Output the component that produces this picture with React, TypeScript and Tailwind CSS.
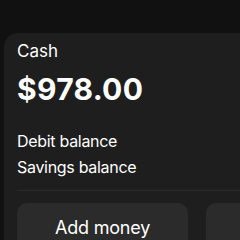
export default function App() {
  return (
    <div
      className="w-[240px] h-[240px] overflow-hidden bg-[#111111] pt-[33px] pl-[4px]"
      style={{ fontFamily: "Inter, 'Noto Sans', sans-serif" }}
    >
      <div className="w-[400px] rounded-tl-[14px] bg-[#1e1e1e] pl-[13px] pr-[13px] pt-[6px] pb-4">
        <div className="text-[17px] leading-[24px] text-white">Cash</div>
        <div className="mt-[8px] text-[30px] leading-[36px] font-bold tracking-[0.3px] text-white">$978.00</div>
        <div className="mt-[21px] text-[16px] leading-[26px] tracking-[-0.3px] text-white">Debit balance</div>
        <div className="text-[16px] leading-[26px] tracking-[-0.3px] text-white">Savings balance</div>
        <div className="mt-[10px] h-px bg-[#2a2a2a]" />
        <div className="mt-[12px] flex gap-[18px]">
          <div className="w-[171px] rounded-[10px] bg-[#2b2b2b] pt-[11px] pb-[14px] text-center text-[18px] leading-[28px] tracking-[-0.2px] text-white">
            Add money
          </div>
          <div className="w-[171px] h-[53px] rounded-[10px] bg-[#2b2b2b]" />
        </div>
      </div>
    </div>
  );
}
